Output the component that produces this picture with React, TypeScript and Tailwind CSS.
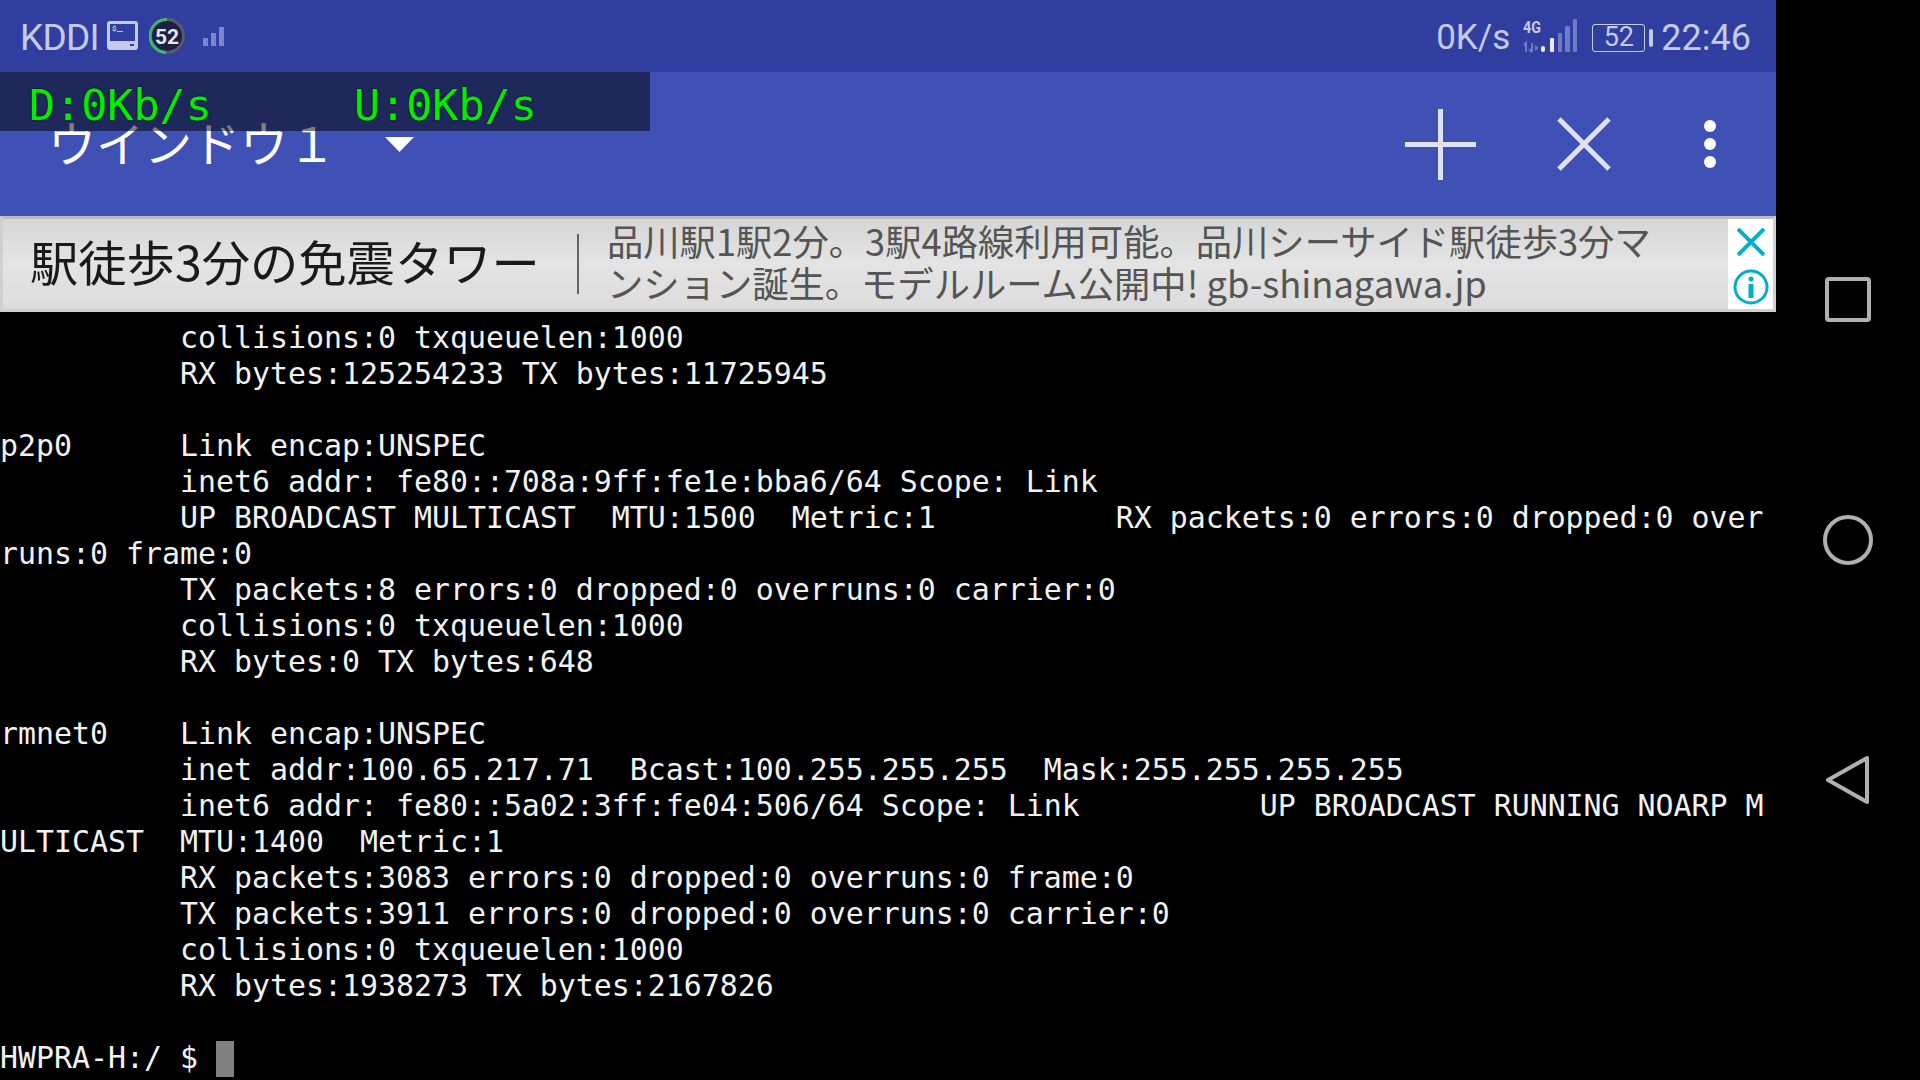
// App.tsx
import React from 'react';

const terminalLines = [
  '          collisions:0 txqueuelen:1000',
  '          RX bytes:125254233 TX bytes:11725945',
  '',
  'p2p0      Link encap:UNSPEC',
  '          inet6 addr: fe80::708a:9ff:fe1e:bba6/64 Scope: Link',
  '          UP BROADCAST MULTICAST  MTU:1500  Metric:1          RX packets:0 errors:0 dropped:0 over',
  'runs:0 frame:0',
  '          TX packets:8 errors:0 dropped:0 overruns:0 carrier:0',
  '          collisions:0 txqueuelen:1000',
  '          RX bytes:0 TX bytes:648',
  '',
  'rmnet0    Link encap:UNSPEC',
  '          inet addr:100.65.217.71  Bcast:100.255.255.255  Mask:255.255.255.255',
  '          inet6 addr: fe80::5a02:3ff:fe04:506/64 Scope: Link          UP BROADCAST RUNNING NOARP M',
  'ULTICAST  MTU:1400  Metric:1',
  '          RX packets:3083 errors:0 dropped:0 overruns:0 frame:0',
  '          TX packets:3911 errors:0 dropped:0 overruns:0 carrier:0',
  '          collisions:0 txqueuelen:1000',
  '          RX bytes:1938273 TX bytes:2167826',
  '',
];

function StatusBar() {
  return (
    <div className="flex h-[72px] items-center bg-[#303f9f] pl-[20px] pr-[25px] font-['Roboto',sans-serif] text-[#c5cae9]">
      <span className="w-[76px] pt-[2px] text-[37px] leading-none tracking-[-0.8px]">KDDI</span>
      {/* terminal app icon */}
      <svg width="31" height="38" viewBox="0 0 31 38" className="ml-[11px]">
        <rect width="31" height="29" y="4" rx="3" fill="#c5cae9" />
        <rect x="3" y="7" width="25" height="17" fill="#303f9f" />
        <rect x="23" y="27" width="4" height="2" fill="#303f9f" />
        <text x="5" y="14" fontSize="8" fontWeight="700" fontFamily="Roboto" fill="#c5cae9">$</text>
        <rect x="10" y="14" width="6" height="1" fill="#c5cae9" />
      </svg>
      {/* battery badge */}
      <svg width="36" height="38" viewBox="0 0 36 38" className="ml-[11px]">
        <circle cx="18" cy="19" r="16.5" fill="#1c2142" stroke="#555a6e" strokeWidth="3" />
        <path d="M18 2.5a16.5 16.5 0 0 0 -1 33" fill="none" stroke="#3fb56f" strokeWidth="3" />
        <text x="18" y="26.5" textAnchor="middle" fontSize="21" fontWeight="700" fontFamily="Roboto" fill="#e3e6f5">52</text>
      </svg>
      <svg width="22" height="20" viewBox="0 0 22 20" className="ml-[18px] mt-[1px]" fill="#7986cb">
        <rect x="0" y="11" width="5" height="8" />
        <rect x="8" y="6" width="5" height="13" />
        <rect x="16" y="0" width="5" height="19" />
      </svg>
      <span className="ml-auto pt-[3px] text-[35px] leading-none">0K/s</span>
      {/* 4G signal */}
      <svg width="56" height="36" viewBox="0 0 56 36" className="ml-[13px]">
        <text x="0" y="15" fontSize="17" fontWeight="700" fontFamily="Roboto" textLength="18" lengthAdjust="spacingAndGlyphs" fill="#c5cae9">4G</text>
        <path d="M3 34V25l-2 2M9 25v9M9 34l-3-3M12 28l2 2-2 2" fill="none" stroke="#6f7cc4" strokeWidth="2" />
        <rect x="18" y="28" width="4" height="6" rx="2" fill="#e8eaf6" />
        <rect x="27" y="20" width="4" height="14" rx="1" fill="#e8eaf6" />
        <rect x="35" y="15" width="4" height="19" rx="1" fill="#6f7cc4" />
        <rect x="42" y="8" width="5" height="26" rx="1" fill="#6f7cc4" />
        <rect x="50" y="1" width="4" height="33" rx="1" fill="#6f7cc4" />
      </svg>
      <div className="ml-[13px] flex items-center pt-[3px]">
        <div className="flex h-[28px] w-[53px] items-center justify-center rounded-[3px] border-[1.5px] border-[#c5cae9] text-[27px] leading-none">
          52
        </div>
        <div className="ml-[4px] h-[18px] w-[4px] rounded-[2px] bg-[#c5cae9]" />
      </div>
      <span className="ml-[8px] pt-[3px] text-[36px] leading-none">22:46</span>
    </div>
  );
}

function Toolbar() {
  return (
    <div className="flex h-[144px] items-center bg-[#3f51b5]">
      <span className="mb-[6px] ml-[48px] w-[288px] whitespace-nowrap font-['Noto_Sans_CJK_JP',sans-serif] text-[48px] leading-none text-white">
        ウインドウ１
      </span>
      <svg width="29" height="15" viewBox="0 0 29 15" className="ml-[49px]">
        <path d="M0 0h29L14.5 15z" fill="#fff" />
      </svg>
      <svg width="71" height="71" viewBox="0 0 71 71" className="ml-auto" fill="#dfe2f5">
        <rect x="33" y="0" width="5" height="71" />
        <rect x="0" y="33" width="71" height="5" />
      </svg>
      <svg width="54" height="54" viewBox="0 0 54 54" className="ml-[81px]" stroke="#dfe2f5" strokeWidth="5">
        <path d="M2 2l50 50M52 2L2 52" />
      </svg>
      <div className="ml-[93px] mr-[60px] flex flex-col gap-[6px]">
        <div className="h-[12px] w-[12px] rounded-full bg-white" />
        <div className="h-[12px] w-[12px] rounded-full bg-white" />
        <div className="h-[12px] w-[12px] rounded-full bg-white" />
      </div>
    </div>
  );
}

function AdBanner() {
  return (
    <div className="flex h-[96px] items-stretch border-[3px] border-[#d0d0d0] border-t-[#bdbdbd] bg-gradient-to-b from-[#d6d6d6] via-[#e4e4e4] to-[#dcdcdc] font-['Noto_Sans_CJK_JP',sans-serif]">
      <div className="flex w-[574px] items-center whitespace-nowrap pb-[8px] pl-[27px] text-[48.3px] leading-none text-[#1a1a1a]">
        駅徒歩3分の免震タワー
      </div>
      <div className="my-[15px] w-[2px] bg-[#666666]" />
      <div className="flex flex-1 flex-col justify-center whitespace-nowrap pb-[7px] pl-[28px] text-[36.3px] leading-[42px] text-[#555555]">
        <div>品川駅1駅2分。3駅4路線利用可能。品川シーサイド駅徒歩3分マ</div>
        <div>ンション誕生。モデルルーム公開中! gb-shinagawa.jp</div>
      </div>
      <div className="flex w-[45px] flex-col items-center justify-between bg-white py-[9px]">
        <svg width="28" height="28" viewBox="0 0 28 28" stroke="#00aecd" strokeWidth="4">
          <path d="M1 1l26 26M27 1L1 27" />
        </svg>
        <svg width="36" height="36" viewBox="0 0 36 36" className="-mb-[5px]">
          <circle cx="18" cy="18" r="16" fill="none" stroke="#00aecd" strokeWidth="3" />
          <circle cx="18" cy="10" r="2.5" fill="#00aecd" />
          <rect x="15.5" y="15" width="5" height="14" fill="#00aecd" />
        </svg>
      </div>
    </div>
  );
}

function Terminal() {
  return (
    <div className="flex-1 overflow-hidden bg-black pt-[8px] font-['DejaVu_Sans_Mono',monospace] text-[29.9px] leading-[36px] text-[#f2f2f2]">
      {terminalLines.map((line, i) => (
        <div key={i} className="h-[36px] whitespace-pre">
          {line}
        </div>
      ))}
      <div className="flex h-[36px] whitespace-pre">
        <span>HWPRA-H:/ $ </span>
        <span className="mt-[1px] h-[36px] w-[18px] bg-[#808080]" />
      </div>
    </div>
  );
}

function NavBar() {
  return (
    <div className="flex w-[144px] flex-col items-center gap-[190px] bg-black pt-[275px]">
      <svg width="50" height="50" viewBox="0 0 50 50" fill="none" stroke="#b0b0b0" strokeWidth="4">
        <rect x="4" y="4" width="42" height="41" rx="2" />
      </svg>
      <svg width="50" height="50" viewBox="0 0 50 50" fill="none" stroke="#b0b0b0" strokeWidth="4">
        <circle cx="25" cy="25" r="23" />
      </svg>
      <svg width="50" height="50" viewBox="0 0 50 50" fill="none" stroke="#b0b0b0" strokeWidth="4" strokeLinejoin="round">
        <path d="M44 3v44L5 25z" />
      </svg>
    </div>
  );
}

export default function App() {
  return (
    <div className="relative flex h-[1080px] w-[1920px] overflow-hidden bg-black">
      <div className="flex w-[1776px] flex-col">
        <StatusBar />
        <Toolbar />
        <AdBanner />
        <Terminal />
      </div>
      <NavBar />
      {/* speed meter overlay, lies over the toolbar */}
      <div className="absolute left-0 top-[72px] flex h-[59px] w-[650px] items-start whitespace-pre bg-black/50 pl-[29px] pt-[12px] font-['DejaVu_Sans_Mono',monospace] text-[43.4px] leading-none text-[#00ee00] [text-shadow:0_0_2px_#000]">
        <span className="w-[325px]">D:0Kb/s</span>
        <span>U:0Kb/s</span>
      </div>
    </div>
  );
}
